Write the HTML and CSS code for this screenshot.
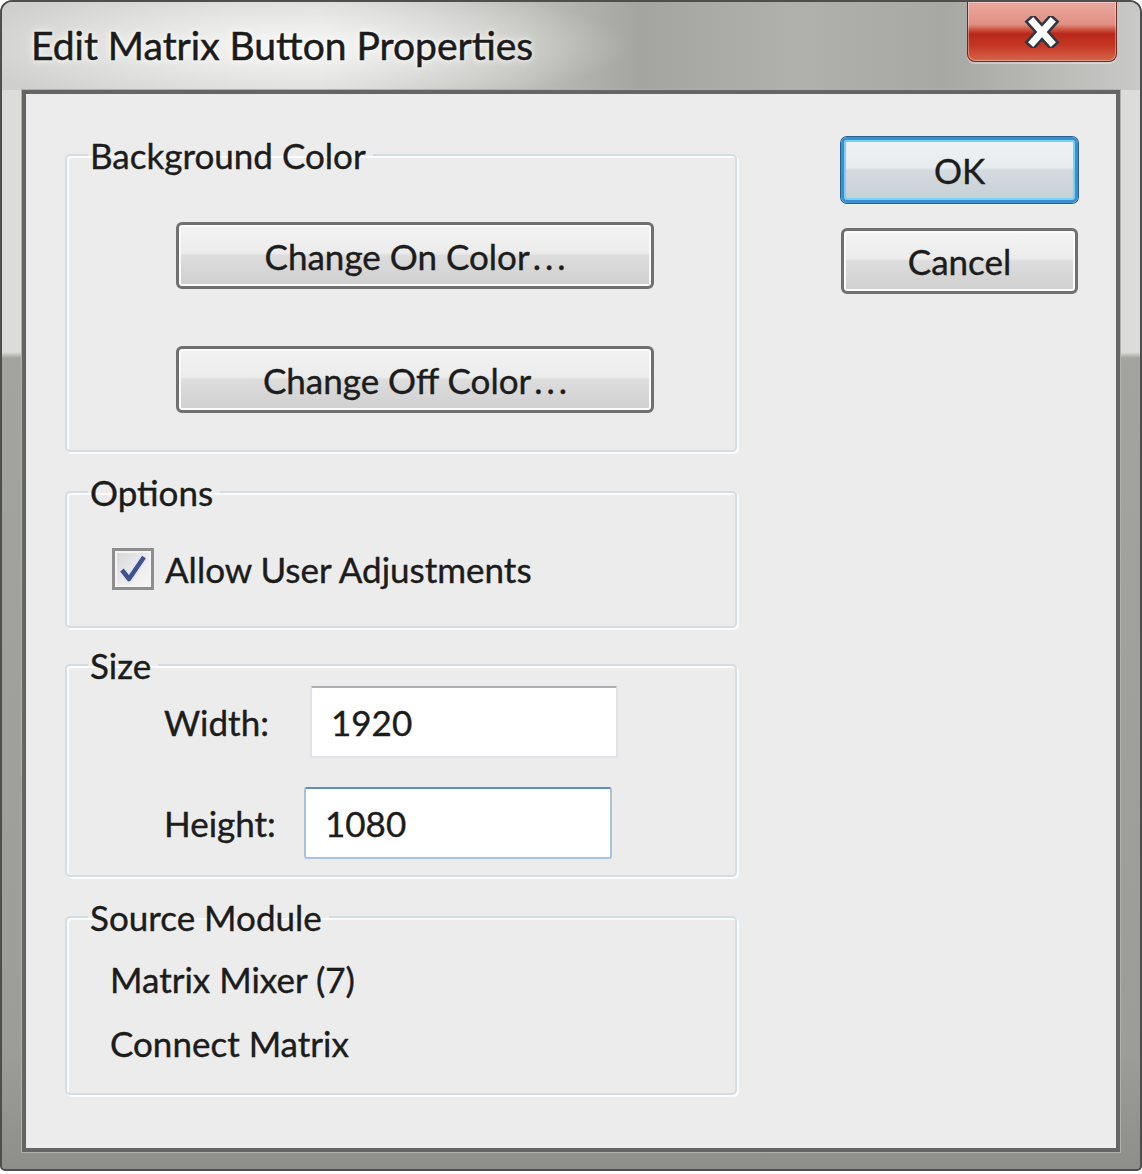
FILE: index.html
```html
<!DOCTYPE html>
<html>
<head>
<meta charset="utf-8">
<title>Edit Matrix Button Properties</title>
<link rel="stylesheet" href="styles.css">
</head>
<body>
<div class="window">
  <div class="titlebar">
    <div class="title">Edit Matrix Button Properties</div>
    <div class="close">
      <svg width="36" height="32" viewBox="0 0 36 32">
        <path d="M9 6 L27 26 M27 6 L9 26" stroke="#2f3542" stroke-width="12" stroke-linecap="square" fill="none"/>
        <path d="M9 6 L27 26 M27 6 L9 26" stroke="#ffffff" stroke-width="7" stroke-linecap="square" fill="none"/>
      </svg>
    </div>
  </div>
  <div class="client">
    <div class="groups">
      <fieldset class="group g-bg">
        <legend>Background Color</legend>
        <div class="btn color-btn first">Change On Color<span class="dots">...</span></div>
        <div class="btn color-btn second">Change Off Color<span class="dots">...</span></div>
      </fieldset>
      <fieldset class="group g-opt">
        <legend>Options</legend>
        <div class="check-row">
          <span class="checkbox">
            <svg width="36" height="36" viewBox="0 0 36 36">
              <path d="M7 19 L14 28 L29 6" stroke="#dfe6f3" stroke-width="8" fill="none" stroke-linejoin="round"/>
              <path d="M7 19 L14 28 L29 6" stroke="#3f528e" stroke-width="4.5" fill="none" stroke-linejoin="round"/>
            </svg>
          </span>
          <span class="check-label">Allow User Adjustments</span>
        </div>
      </fieldset>
      <fieldset class="group g-size">
        <legend>Size</legend>
        <div class="field f-w">
          <span class="field-label">Width:</span>
          <span class="input">1920</span>
        </div>
        <div class="field f-h">
          <span class="field-label">Height:</span>
          <span class="input focus">1080</span>
        </div>
      </fieldset>
      <fieldset class="group g-src">
        <legend>Source Module</legend>
        <div class="src-line first">Matrix Mixer (7)</div>
        <div class="src-line">Connect Matrix</div>
      </fieldset>
    </div>
    <div class="actions">
      <div class="btn action ok">OK</div>
      <div class="btn action">Cancel</div>
    </div>
  </div>
</div>
</body>
</html>
```

FILE: styles.css
```css
html, body {
  margin: 0;
  padding: 0;
  background: #ffffff;
}

body {
  font-family: Lato, "Open Sans", sans-serif;
  font-size: 35px;
  color: #1c1c1c;
  -webkit-text-stroke: 0.4px #1c1c1c;
}

.window {
  width: 1142px;
  height: 1171px;
  box-sizing: border-box;
  border: 2px solid #4e4e4e;
  border-radius: 12px 12px 5px 5px;
  background: linear-gradient(to bottom, #dcdcda 0, #dcdcda 350px, #a3a39f 356px, #9c9c98 1050px, #8e8e8a 100%);
  display: flex;
  flex-direction: column;
  overflow: hidden;
}

.titlebar {
  height: 88px;
  flex: none;
  display: flex;
  align-items: flex-start;
  background:
    radial-gradient(ellipse 340px 62px at 290px 44px, rgba(255,255,255,0.8), rgba(255,255,255,0) 100%),
    linear-gradient(90deg, #cfcfcd 0, #d8d8d6 28%, #bdbdb9 46%, #a4a4a0 56%, #b0b0ac 70%, #a7a7a3 83%, #c9c9c7 100%);
}

.title {
  margin: 21px 0 0 29px;
  font-size: 39px;
  line-height: 44px;
  color: #1b1b1b;
  -webkit-text-stroke: 0.5px #1b1b1b;
  text-shadow: 0 0 10px rgba(255,255,255,0.95), 0 0 4px rgba(255,255,255,0.9);
}

.close {
  margin-left: auto;
  margin-right: 23px;
  width: 150px;
  height: 60px;
  box-sizing: border-box;
  border: 1px solid #6a2a22;
  border-top: none;
  border-radius: 0 0 8px 8px;
  background: linear-gradient(to bottom, #eaa99f 0, #e18f82 38%, #cf5844 46%, #b8281a 54%, #c53723 74%, #d7654b 100%);
  box-shadow: inset 0 0 0 1px rgba(255,255,255,0.35), 0 2px 0 rgba(255,255,255,0.35);
  display: flex;
  align-items: center;
  justify-content: center;
}

.client {
  margin: 0 20px;
  height: 1062px;
  box-sizing: border-box;
  border: 4px solid #656565;
  box-shadow: 0 0 0 1px #b0b0ac;
  background: #ececec;
  display: flex;
  padding: 43px 38px 0 39px;
}

.groups {
  width: 672px;
  padding-top: 1px;
  display: flex;
  flex-direction: column;
}

.group {
  margin: 0;
  padding: 0;
  min-inline-size: 0;
  width: 672px;
  box-sizing: border-box;
  border: 2px solid #d3dde4;
  border-radius: 5px;
  box-shadow: inset 2px 2px 0 #fbfbfb, 2px 2px 0 #fbfbfb;
}

.group legend {
  margin-left: 21px;
  padding: 0 7px 0 2px;
  line-height: 34px;
  font-size: 35px;
}

.g-opt { margin-top: 23px; }
.g-size { margin-top: 20px; }
.g-src { margin-top: 23px; }

.btn {
  box-sizing: border-box;
  border: 3px solid #707070;
  border-radius: 6px;
  background: linear-gradient(to bottom, #f3f3f3 0, #ececec 46%, #dddddd 50%, #cfcfcf 100%);
  box-shadow: inset 0 0 0 2px #fbfbfb;
  display: flex;
  align-items: center;
  justify-content: center;
  color: #1c1c1c;
}

.dots {
  letter-spacing: 4px;
  margin-left: 3px;
  margin-right: -4px;
}

.color-btn {
  width: 478px;
  height: 67px;
  margin-left: 109px;
}

.color-btn.first { margin-top: 50px; }
.color-btn.second { margin-top: 57px; margin-bottom: 37px; }

.check-row {
  display: flex;
  align-items: center;
  height: 42px;
  margin: 39px 0 36px 45px;
}

.checkbox {
  width: 42px;
  height: 42px;
  box-sizing: border-box;
  border: 3px solid #8e8e8e;
  background: linear-gradient(135deg, #d6d6d6 0, #eeeeee 60%, #f6f6f6 100%);
  box-shadow: inset 0 0 0 2px #f4f4f4;
  display: flex;
  align-items: center;
  justify-content: center;
}

.check-label {
  margin-left: 11px;
}

.field {
  display: flex;
  align-items: center;
  height: 72px;
  margin-left: 97px;
}

.f-w { margin-top: 4px; }
.f-h { margin-top: 29px; margin-bottom: 16px; }

.f-w .field-label { width: 146px; }
.f-h .field-label { width: 140px; }

.input {
  box-sizing: border-box;
  width: 308px;
  height: 72px;
  background: #ffffff;
  border: 2px solid #e2e3ea;
  border-top-color: #abadb3;
  border-radius: 3px;
  padding-left: 19px;
  display: flex;
  align-items: center;
}

.input.focus {
  border-color: #a4c3e3;
  border-top-color: #5d8fc4;
}

.src-line {
  margin-left: 43px;
  line-height: 34px;
  margin-top: 30px;
}

.src-line.first { margin-top: 28px; }
.src-line:last-child { margin-bottom: 33px; }

.actions {
  width: 237px;
  margin-left: auto;
  display: flex;
  flex-direction: column;
}

.action {
  height: 66px;
}

.action + .action { margin-top: 25px; }

.ok {
  border-color: #3a8fcf;
  box-shadow: inset 0 0 0 2px #74d2f7, 0 0 0 1px #2b5f8c;
  background: linear-gradient(to bottom, #eef2f4 0, #e7ecef 46%, #d4dbdf 50%, #c6d0d5 100%);
}
```
